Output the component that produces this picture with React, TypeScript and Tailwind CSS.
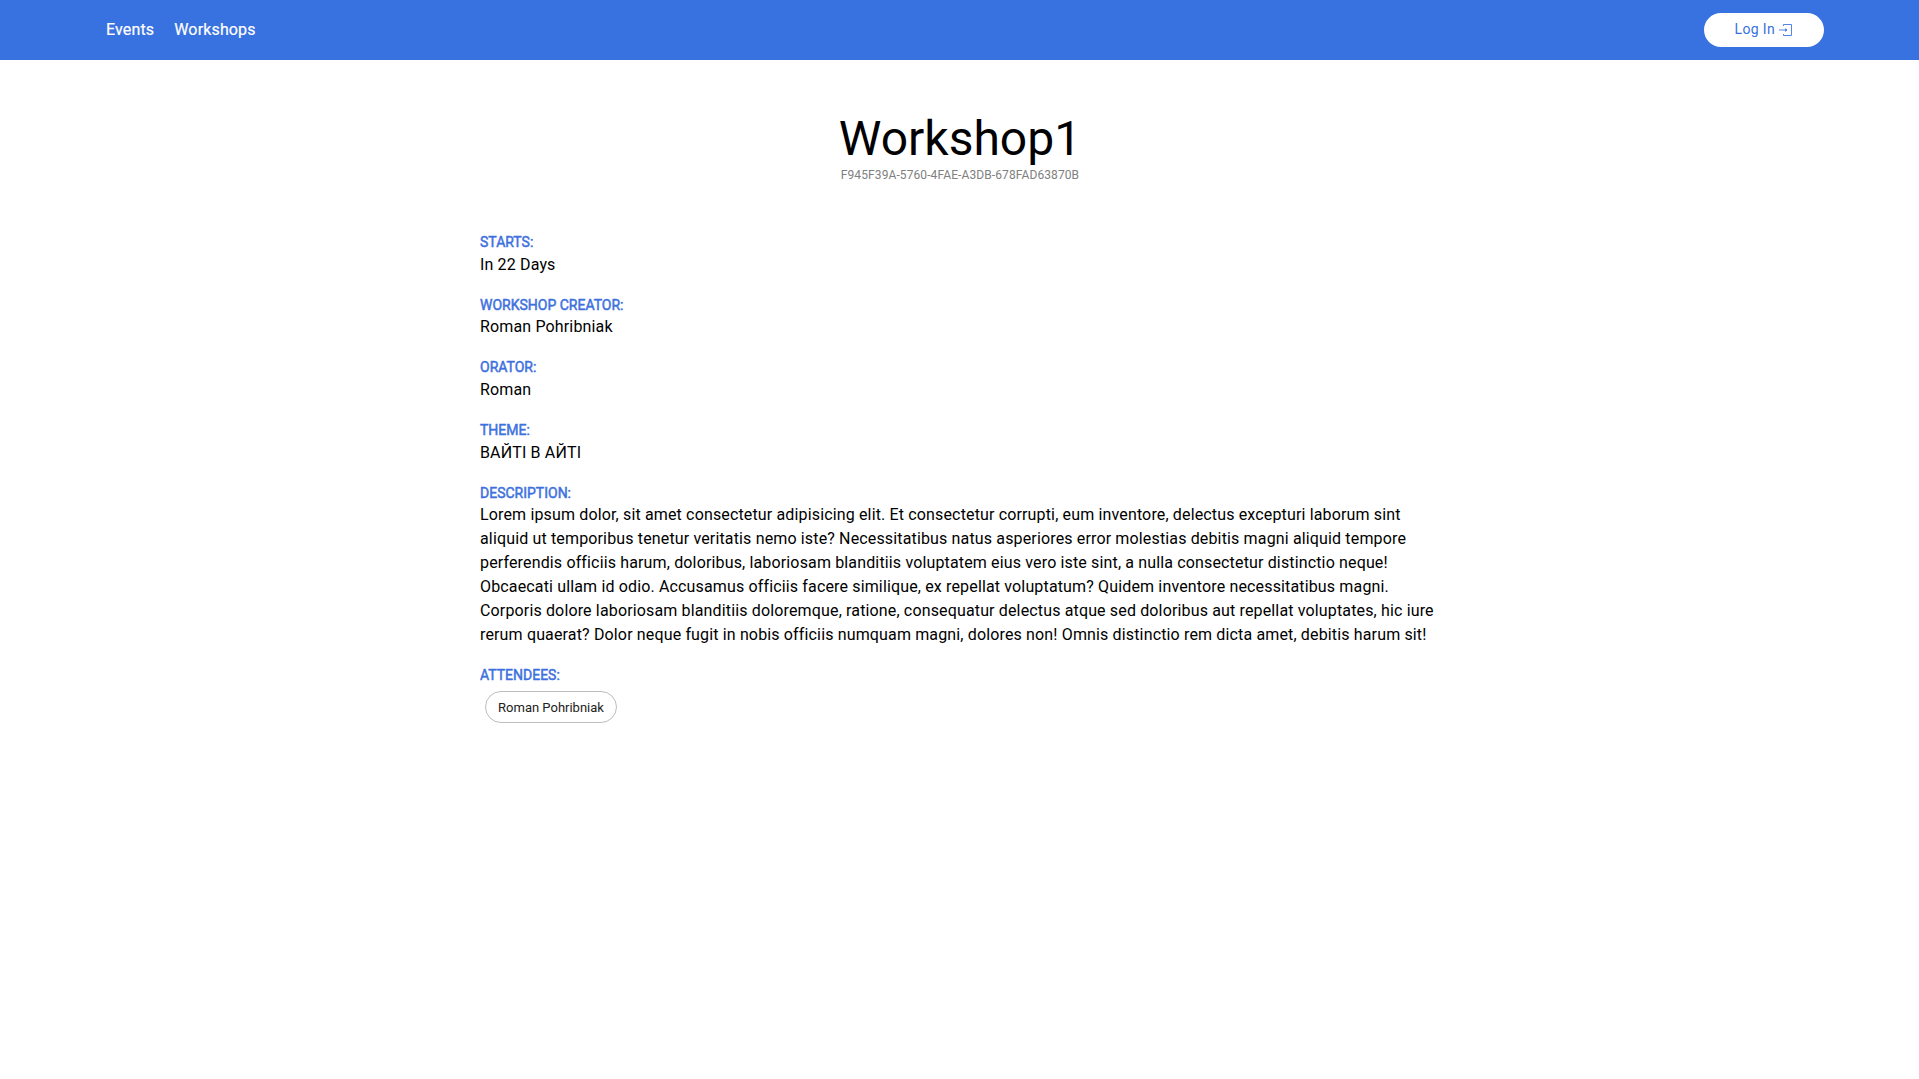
import React from "react";

const fields = [
  { label: "Starts:", value: "In 22 Days" },
  { label: "Workshop creator:", value: "Roman Pohribniak" },
  { label: "Orator:", value: "Roman" },
  { label: "Theme:", value: "ВАЙТІ В АЙТІ" },
  {
    label: "Description:",
    value:
      "Lorem ipsum dolor, sit amet consectetur adipisicing elit. Et consectetur corrupti, eum inventore, delectus excepturi laborum sint aliquid ut temporibus tenetur veritatis nemo iste? Necessitatibus natus asperiores error molestias debitis magni aliquid tempore perferendis officiis harum, doloribus, laboriosam blanditiis voluptatem eius vero iste sint, a nulla consectetur distinctio neque! Obcaecati ullam id odio. Accusamus officiis facere similique, ex repellat voluptatum? Quidem inventore necessitatibus magni. Corporis dolore laboriosam blanditiis doloremque, ratione, consequatur delectus atque sed doloribus aut repellat voluptates, hic iure rerum quaerat? Dolor neque fugit in nobis officiis numquam magni, dolores non! Omnis distinctio rem dicta amet, debitis harum sit!",
  },
];

function Label({ children }: { children: React.ReactNode }) {
  return (
    <h2 className="text-sm leading-[20.75px] font-normal text-[#3871e0] uppercase [-webkit-text-stroke:0.5px_#4472de]">
      {children}
    </h2>
  );
}

export default function App() {
  return (
    <div className="min-h-screen bg-white font-['Roboto',sans-serif] text-base text-black">
      <header className="flex h-[60px] items-center justify-between bg-[#3871e0] pr-[95px] pl-[106px]">
        <nav className="flex gap-5 tracking-[0.15px] text-white [-webkit-text-stroke:0.2px_#fff]">
          <a>Events</a>
          <a>Workshops</a>
        </nav>
        <button className="flex h-[34px] w-[120px] items-center gap-1 rounded-full bg-white pl-[30.5px] text-sm tracking-[0.35px] text-[#3871e0]">
          <span className="-mt-0.5">Log In</span>
          <svg className="h-[14px] w-[13px]" viewBox="0 0 13 14" fill="none" stroke="currentColor" strokeOpacity="0.85">
            <path d="M4.5 3V1.5H12.5V12.5H4.5V11M0 7H8" />
            <path d="M6.3 5L8.3 7L6.3 9Z" fill="currentColor" stroke="none" />
          </svg>
        </button>
      </header>
      <main className="mx-auto w-[959px]">
        <div className="flex flex-col items-center pt-[51px]">
          <h1 className="pl-px text-5xl leading-[56px]">Workshop1</h1>
          <p className="pl-px text-xs tracking-[0.1px] text-[#808080]">F945F39A-5760-4FAE-A3DB-678FAD63870B</p>
        </div>
        <div className="mt-[49px] flex flex-col gap-[18px]">
          {fields.map((f) => (
            <section key={f.label}>
              <Label>{f.label}</Label>
              <p className="-mt-[0.25px] mb-[0.2px] tracking-[0.148px]">{f.value}</p>
            </section>
          ))}
          <section>
            <Label>Attendees:</Label>
            <span className="mt-[5px] ml-[5px] inline-flex h-8 w-[132px] items-center justify-center rounded-full border border-[#bdbdbd] pt-px text-[13px] text-[#212121]">
              Roman Pohribniak
            </span>
          </section>
        </div>
      </main>
    </div>
  );
}
